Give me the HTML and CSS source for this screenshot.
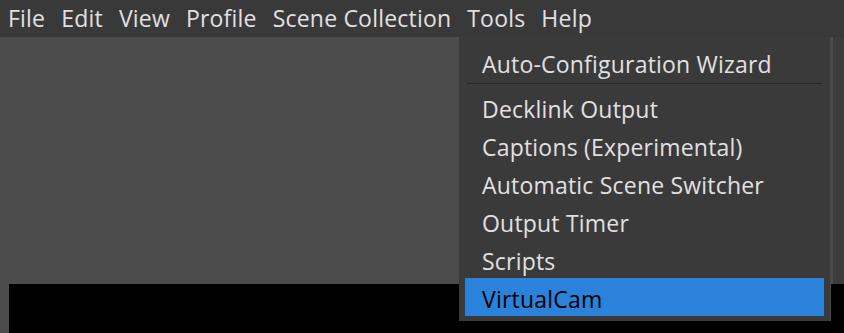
FILE: index.html
```html
<!DOCTYPE html>
<html lang="en">

<head>
    <meta charset="UTF-8">
    <meta name="viewport" content="width=device-width, initial-scale=1.0">
    <title>OBS Tools Menu</title>
    <link rel="stylesheet" href="styles.css">
</head>

<body>
    <div class="menubar">
        <span class="menubar-item">File</span>
        <span class="menubar-item">Edit</span>
        <span class="menubar-item">View</span>
        <span class="menubar-item">Profile</span>
        <span class="menubar-item">Scene Collection</span>
        <span class="menubar-item open">Tools</span>
        <span class="menubar-item">Help</span>
    </div>

    <div class="main">
        <div class="top-area">
            <div class="preview-bg"></div>
            <div class="side-strip"></div>
        </div>
        <div class="preview"></div>
    </div>

    <!-- Tools dropdown -->
    <div class="dropdown">
        <div class="dropdown-item">Auto-Configuration Wizard</div>
        <div class="separator"></div>
        <div class="dropdown-item">Decklink Output</div>
        <div class="dropdown-item">Captions (Experimental)</div>
        <div class="dropdown-item">Automatic Scene Switcher</div>
        <div class="dropdown-item">Output Timer</div>
        <div class="dropdown-item">Scripts</div>
        <div class="dropdown-item active">VirtualCam</div>
    </div>
</body>

</html>
```

FILE: styles.css
```css
html,
body {
    height: 100%;
}

body {
    margin: 0;
    overflow: hidden;
    background: #4c4c4c;
    font-family: "Open Sans", "Noto Sans", sans-serif;
    font-size: 23px;
    letter-spacing: 0.2px;
    color: #e1e0e1;
    display: flex;
    flex-direction: column;
}

.menubar {
    height: 37px;
    background: #3a393a;
    display: flex;
    align-items: center;
}

.menubar-item {
    padding: 0 8px;
    line-height: 37px;
    white-space: nowrap;
}

.main {
    flex: 1;
    display: flex;
    flex-direction: column;
}

.top-area {
    height: 247px;
    display: flex;
}

.preview-bg {
    flex: 1;
    background: #4c4c4c;
}

.side-strip {
    width: 11px;
    background: #3c3c3c;
}

.preview {
    flex: 1;
    margin-left: 9px;
    background: #000;
}

.dropdown {
    position: absolute;
    top: 37px;
    left: 459px;
    width: 359px;
    padding: 6px 6px 5px 6px;
    background: #3b3a3b;
    border-right: 1px solid #484848;
}

.dropdown-item {
    height: 36px;
    padding: 2px 0 0 17px;
    line-height: 38px;
    white-space: nowrap;
}

.dropdown-item.active {
    background: #2a82da;
    color: #000;
}

.separator {
    height: 1px;
    margin: 2px 2px 4px 2px;
    background: #272727;
}
```
